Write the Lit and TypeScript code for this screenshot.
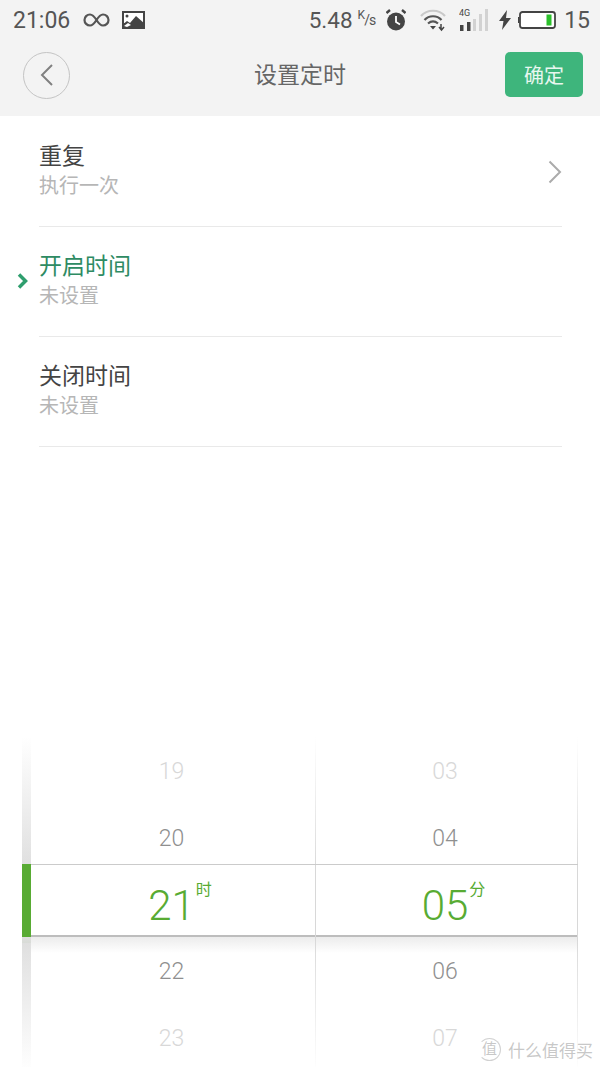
import { LitElement, html, css } from "lit";
import { customElement } from "lit/decorators.js";

@customElement("app-root")
export class AppRoot extends LitElement {
  static styles = css`
    :host { display: block; width: 600px; height: 1067px; overflow: hidden; background: #fff; font-family: Roboto, "Noto Sans CJK SC", sans-serif; }
    .root { position: relative; width: 600px; height: 1067px; display: flex; flex-direction: column; font-family: Roboto, "Noto Sans CJK SC", sans-serif; }
    .head { background: #f3f3f3; height: 116px; flex: none; }
    .status { height: 40px; display: flex; align-items: center; padding: 0 10px 0 13px; color: #555; font-size: 23px; box-sizing: border-box; }
    .status svg { display: block; flex: none; }
    .grow { flex: 1; }
    .speed { font-size: 22.5px; }
    .unit { font-size: 14px; margin: 0 11px 0 5px; letter-spacing: -1px; line-height: 1; }
    .unit sup { font-size: 12px; vertical-align: 6px; line-height: 0; }
    .nav { height: 76px; display: grid; grid-template-columns: 1fr auto 1fr; align-items: center; padding: 0 17px 6px 17px; box-sizing: border-box; }
    .title { font-size: 23px; color: #666; line-height: 30px; padding-top: 2px; }
    .back { margin-left: 6px; width: 47px; height: 47px; border-radius: 50%; border: 1px solid #c4c4c4; box-sizing: border-box; display: flex; align-items: center; justify-content: center; }
    .ok { justify-self: end; width: 78px; height: 45px; margin-bottom: 2px; border-radius: 5px; background: #3eb57c; color: #e8f7ef; font-size: 20px; display: flex; align-items: center; justify-content: center; }
    .list { padding-top: 1px; flex: none; }
    .row { height: 110px; display: grid; grid-template-columns: 39px 1fr; }
    .mark { display: flex; align-items: center; padding: 0 0 2px 17px; box-sizing: border-box; }
    .body { border-bottom: 1px solid #e9e9e9; margin-right: 38px; padding-top: 25px; box-sizing: border-box; display: flex; align-items: flex-start; justify-content: space-between; }
    .t { font-size: 23px; line-height: 30px; color: #444; }
    .t.on { color: #2e8b63; }
    .s { font-size: 20px; line-height: 30px; margin-top: -1px; color: #b6b6b6; }
    .chev { margin-top: 18px; }
    .picker { margin-top: auto; flex: none; height: 330px; margin-left: 22px; margin-right: 22px; }
    .sec { display: grid; grid-template-columns: 9px 285px 1fr; overflow: hidden; }
    .sec.top { height: 127px; }
    .sec.bot { height: 130px; background: linear-gradient(#ececec, #fff) no-repeat 0 0 / 100% 16px; }
    .strip.up { background: linear-gradient(transparent, #dedede); }
    .strip.down { background: linear-gradient(#dedede, transparent); }
    .col { padding: 2px 3px 0 0; box-sizing: border-box; text-align: center; font-size: 23px; font-weight: 300; border-right: 1px solid; }
    .top .col { border-image: linear-gradient(transparent, #d8d8d8) 1; }
    .bot .col { border-image: linear-gradient(#d8d8d8, transparent) 1; }
    .r { height: 66.5px; line-height: 66.5px; }
    .near { color: #8f8f8f; }
    .far { color: #d8d8d8; }
    .band { height: 73px; box-sizing: border-box; display: grid; grid-template-columns: 9px 285px 1fr; border-top: 1px solid #cbcbcb; border-bottom: 2px solid #bdbdbd; }
    .bar { background: #58ab33; margin: -1px 0 -2px; }
    .cell { padding-right: 3px; box-sizing: border-box; display: flex; justify-content: center; align-items: center; border-right: 1px solid #d8d8d8; color: #58ab33; font-size: 42px; font-weight: 300; line-height: 70px; }
    .num { position: relative; padding-top: 6px; }
    .num i { position: absolute; left: 100%; top: 13px; margin-left: 1px; font-style: normal; font-weight: 400; font-size: 16px; line-height: 24px; white-space: nowrap; }
    .wm { position: absolute; left: 478px; top: 1037px; display: flex; align-items: center; gap: 7px; color: rgba(175,175,175,.7); font-size: 17px; text-shadow: 0 0 1px #fff; }
    .wm .logo { width: 21px; height: 21px; border-radius: 50%; border: 1px solid rgba(190,190,190,.7); border-left-color: transparent; display: flex; align-items: center; justify-content: center; font-size: 15px; line-height: 1; }
  `;

  render() {
    return html`<div class="root">
      <div class="head">
        <div class="status">
          <span>21:06</span>
          <svg style="margin-left:13px" width="27" height="14" viewBox="0 0 27 14" fill="none" stroke="#555" stroke-width="2.2"><path d="M13.5 7C11 3 9.500 1.500 7 1.500a5.500 5.500 0 0 0 0 11c2.500 0 4-1.500 6.500-5.500s4-5.500 6.500-5.500a5.500 5.500 0 0 1 0 11c-2.500 0-4-1.500-6.500-5.500z"/></svg>
          <svg style="margin-left:12px" width="23" height="18" viewBox="0 0 23 18"><rect width="23" height="18" fill="#444"/><rect x="2" y="2" width="19" height="10" fill="#fff"/><circle cx="5" cy="5" r="1.500" fill="#444"/><path d="M0 18V14L5 10 8 12 14 5 23 13V18z" fill="#444"/><path d="M2 15 6 12 9 14 5 16z" fill="#fff"/></svg>
          <span class="grow"></span>
          <span class="speed">5.48</span>
          <span class="unit"><sup>K</sup>/s</span>
          <svg width="20" height="22" viewBox="0 0 20 22"><circle cx="10" cy="12.500" r="9" fill="#444"/><path d="M10 7v6l4 2.500" fill="none" stroke="#fff" stroke-width="1.800"/><path d="M0.500 4 4 1M19.500 4 16 1" stroke="#444" stroke-width="2.400"/></svg>
          <svg style="margin-left:14px" width="27" height="24" viewBox="0 0 27 24" fill="none"><path d="M1 8C7 1 19 1 25 8" stroke="#c9c9c9" stroke-width="2.200"/><path d="M4.500 12C9 7 17 7 21.500 12" stroke="#555" stroke-width="2.200"/><path d="M8 15.500C11 13 15 13 18 15.500" stroke="#555" stroke-width="2.200"/><path d="M10 18h6l-3 3.500z" fill="#444"/><path d="M21 16v5M19 19l2.500 3 2.500-3" stroke="#444" stroke-width="1.500"/></svg>
          <svg style="margin-left:12px" width="31" height="24" viewBox="0 0 31 24"><text x="0" y="8" font-size="9" font-family="Roboto, sans-serif" fill="#444">4G</text><g fill="#d2d2d2"><rect x="14" y="11" width="3" height="12"/><rect x="20" y="6" width="3" height="17"/><rect x="26" y="1" width="3" height="22"/></g><g fill="#444"><rect x="1" y="17" width="3.500" height="6"/><rect x="8" y="14" width="3.500" height="9"/></g></svg>
          <svg style="margin-left:9px" width="12" height="20" viewBox="0 0 12 20"><path d="M8 0 0 11h4.500L3 20 12 8H7z" fill="#444"/></svg>
          <svg style="margin-left:7px" width="38" height="18" viewBox="0 0 38 18"><rect x="2" y="1" width="35" height="16" rx="2.500" fill="#fff" stroke="#444" stroke-width="1.800"/><rect x="0" y="6" width="1.500" height="6" fill="#444"/><rect x="28.500" y="3.500" width="5" height="11" fill="#2bc02b"/></svg>
          <span style="margin-left:8px">15</span>
        </div>
        <div class="nav">
          <div class="back"><svg width="16" height="24" viewBox="0 0 16 24" fill="none"><path d="M13 2 3 12l10 10" stroke="#808080" stroke-width="2"/></svg></div>
          <div class="title">设置定时</div>
          <div class="ok">确定</div>
        </div>
      </div>
      <div class="list">
      <div class="row"><div class="mark"></div><div class="body"><div><div class="t">重复</div><div class="s">执行一次</div></div>
        <svg class="chev" width="14" height="24" viewBox="0 0 14 24" fill="none"><path d="M1.500 1.500 12 12 1.500 22.500" stroke="#ababab" stroke-width="2"/></svg></div></div>
      <div class="row"><div class="mark"><svg width="11" height="16" viewBox="0 0 11 16" fill="none"><path d="M2 1.500 8.500 8 2 14.500" stroke="#2f9e6e" stroke-width="3.500"/></svg></div><div class="body"><div><div class="t on">开启时间</div><div class="s">未设置</div></div></div></div>
      <div class="row"><div class="mark"></div><div class="body"><div><div class="t">关闭时间</div><div class="s">未设置</div></div></div></div>
      </div>
      <div class="picker">
        <div class="sec top"><div class="strip up"></div>
          <div class="col"><div class="r far">19</div><div class="r near">20</div></div>
          <div class="col"><div class="r far">03</div><div class="r near">04</div></div>
        </div>
        <div class="band"><div class="bar"></div>
          <div class="cell"><span class="num">21<i>时</i></span></div>
          <div class="cell"><span class="num">05<i>分</i></span></div>
        </div>
        <div class="sec bot"><div class="strip down"></div>
          <div class="col"><div class="r near">22</div><div class="r far">23</div></div>
          <div class="col"><div class="r near">06</div><div class="r far">07</div></div>
        </div>
      </div>
      <div class="wm"><span class="logo">值</span><span>什么值得买</span></div>
    </div>`;
  }
}
